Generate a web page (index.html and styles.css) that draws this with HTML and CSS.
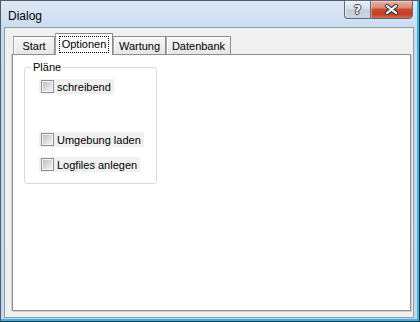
FILE: index.html
```html
<!DOCTYPE html>
<html>
<head>
<meta charset="utf-8">
<link rel="stylesheet" href="styles.css">
</head>
<body>
<div class="window">
  <div class="titlebar">
    <span class="title">Dialog</span>
    <div class="caption">
      <div class="btn help"><span class="help-glyph">?</span></div>
      <div class="btn close">
        <svg width="15" height="11" viewBox="0 0 15 11">
          <path d="M3 2 L12 9 M12 2 L3 9" stroke="#3a3a3a" stroke-width="4.2" stroke-linecap="round" fill="none"/>
          <path d="M3 2 L12 9 M12 2 L3 9" stroke="#ffffff" stroke-width="2.2" stroke-linecap="round" fill="none"/>
        </svg>
      </div>
    </div>
  </div>
  <div class="client">
    <div class="tabstrip">
      <div class="tab tab-start">Start</div>
      <div class="tab active tab-opt"><span class="focus">Optionen</span></div>
      <div class="tab tab-wart">Wartung</div>
      <div class="tab tab-db">Datenbank</div>
    </div>
    <div class="panel">
      <fieldset class="group">
        <legend>Pläne</legend>
        <label class="check"><span class="box"></span><span>schreibend</span></label>
        <label class="check row2"><span class="box"></span><span>Umgebung laden</span></label>
        <label class="check row3"><span class="box"></span><span>Logfiles anlegen</span></label>
      </fieldset>
    </div>
  </div>
</div>
</body>
</html>
```
FILE: styles.css
```css
* { box-sizing: border-box; }
html, body { margin: 0; padding: 0; }
body {
  width: 420px;
  height: 322px;
  overflow: hidden;
  font-family: "Liberation Sans", Arial, sans-serif;
  font-size: 11px;
  color: #000;
  background: #fff;
}
.window {
  width: 420px;
  height: 322px;
  border: 1px solid #4e5b69;
  border-right-color: #243039;
  border-bottom-color: #243039;
  background: linear-gradient(#dde8f5, #c8daef 30px, #c4d7ed);
  box-shadow: inset -2px -2px 0 #35b6e6;
  padding: 0 5px 3px 3px;
  display: flex;
  flex-direction: column;
}
.titlebar {
  height: 26px;
  display: flex;
  align-items: flex-start;
  justify-content: space-between;
}
.title {
  font-size: 12px;
  line-height: 14px;
  margin: 8px 0 0 4px;
  color: #000;
}
.caption {
  display: flex;
  margin-top: -1px;
  margin-right: 1px;
}
.btn {
  height: 19px;
  border: 1px solid #5a6a7c;
  display: flex;
  align-items: center;
  justify-content: center;
}
.help {
  width: 26px;
  border-right: none;
  border-radius: 0 0 0 4px;
  background: linear-gradient(#e8edf3, #d8e0e8 45%, #c2cedb 52%, #cbd6e2);
  box-shadow: inset 1px 1px 0 rgba(255,255,255,0.6);
}
.help-glyph {
  font-family: "DejaVu Sans", sans-serif;
  font-weight: bold;
  font-size: 13px;
  line-height: 13px;
  color: #fff;
  text-shadow: -1px 0 0 #3c3c3c, 1px 0 0 #3c3c3c, 0 -1px 0 #3c3c3c, 0 1px 0 #3c3c3c;
}
.close {
  width: 43px;
  border-radius: 0 0 4px 0;
  background: linear-gradient(#ebb2a3, #da8a76 40%, #c9492f 50%, #c23f28 78%, #d6694e);
  box-shadow: inset 1px 1px 0 rgba(255,255,255,0.35);
}
.client {
  flex: 1;
  border: 1px solid #8f9cae;
  background: #f0f0f0;
  padding: 5px 2px 6px 7px;
  display: flex;
  flex-direction: column;
}
.tabstrip {
  height: 21px;
  display: flex;
  align-items: flex-end;
  padding-left: 1px;
  position: relative;
  z-index: 1;
}
.tab {
  height: 18px;
  padding-top: 3px;
  line-height: 13px;
  text-align: center;
  border: 1px solid #8c8c8c;
  border-bottom: none;
  border-left-color: #a5a5a5;
  background: linear-gradient(#f7f7f7, #e6e6e6);
  box-shadow: inset 1px 1px 0 #ffffff;
}
.tab-start { width: 42px; }
.tab-opt { width: 58px; }
.tab-wart { width: 53px; }
.tab-db { width: 65px; }
.tab.active {
  height: 22px;
  padding-top: 2px;
  background: #fff;
  box-shadow: none;
  margin-bottom: -1px;
}
.focus {
  display: inline-block;
  padding: 1px 2px;
  border: 1px dotted #000;
}
.panel {
  flex: 1;
  background: #fff;
  border: 1px solid #8e8e8e;
  box-shadow: 1px 1px 0 #cfcfcf, -1px 0 0 #cfcfcf;
  padding: 0 0 0 11px;
}
.group {
  width: 133px;
  margin: 6px 0 0 0;
  padding: 5px 6px 11px 6px;
  border: 1px solid #d3dbe2;
  border-radius: 3px;
  min-inline-size: 0;
  display: flex;
  flex-direction: column;
  align-items: flex-start;
}
.group legend {
  padding: 0 2px;
  line-height: 13px;
  font-size: 11px;
}
.check {
  display: flex;
  align-items: center;
  height: 15px;
  margin-left: 8px;
  padding: 0 3px 0 2px;
  gap: 3px;
  background: #f0f0f0;
}
.row2 { margin-top: 38px; }
.row3 { margin-top: 10px; }
.box {
  width: 13px;
  height: 13px;
  border: 1px solid #8e8f8f;
  background: linear-gradient(135deg, #b8bcc2, #e4e6e8 70%, #f2f2f2);
  box-shadow: inset 0 0 0 1px #f4f4f4;
  flex: none;
}
```
